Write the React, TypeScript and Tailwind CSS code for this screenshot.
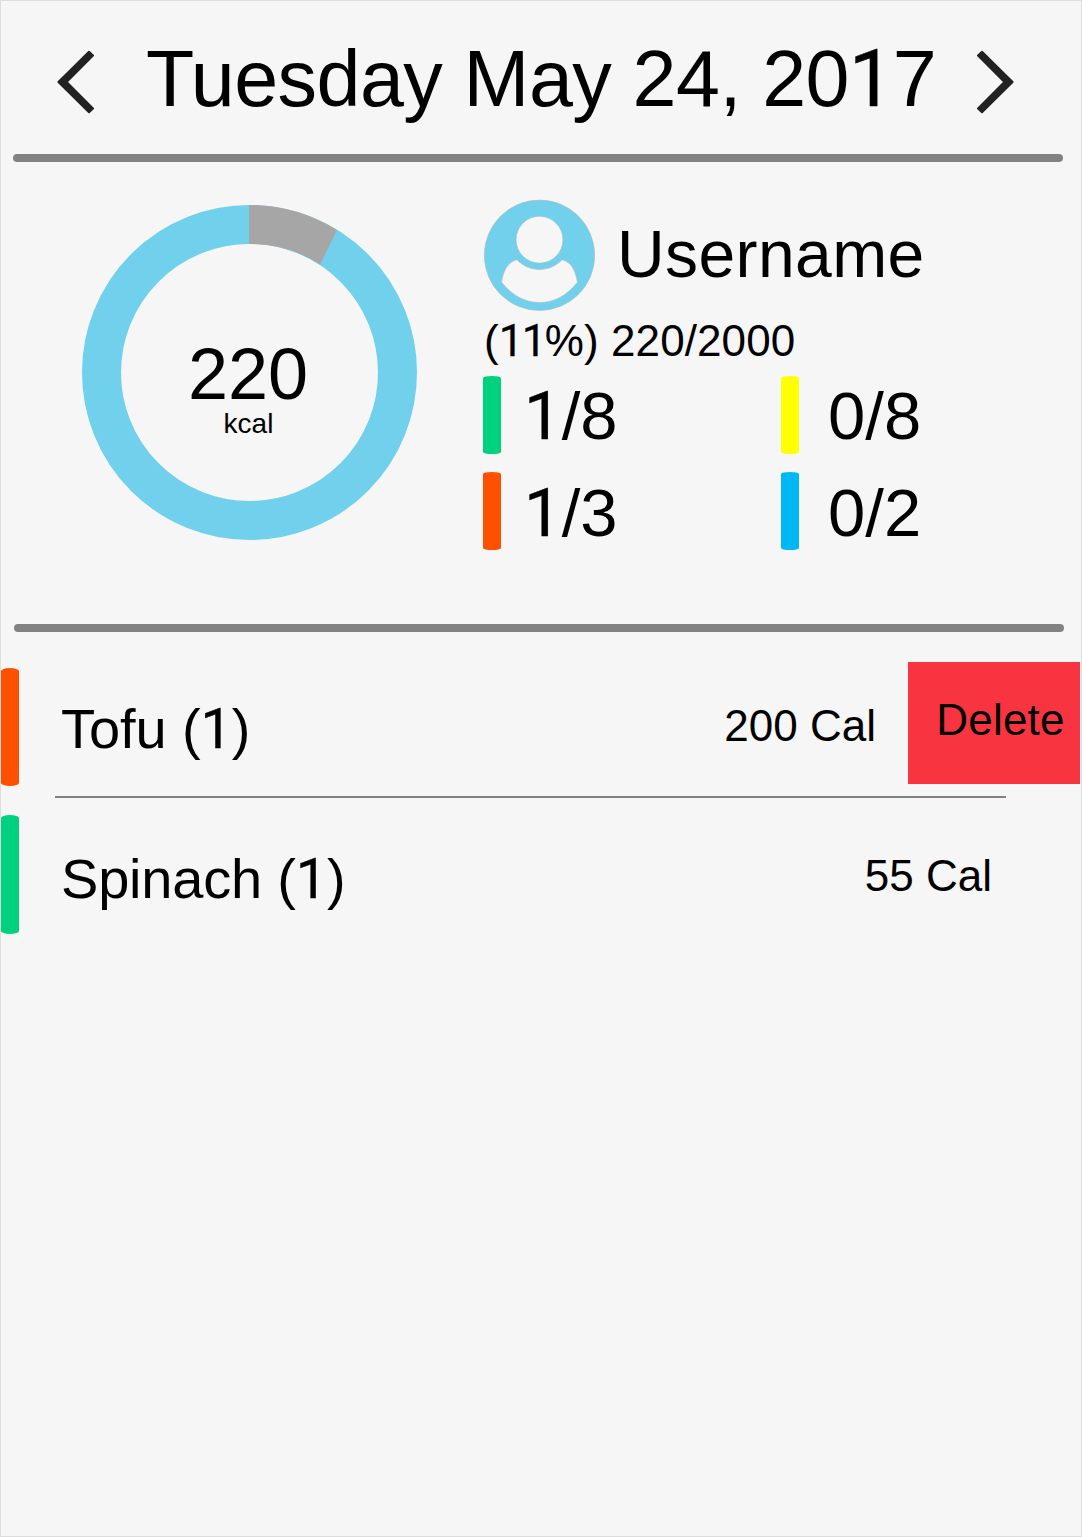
import React from "react";

/** Sets text in Liberation Sans, with plain-stemmed numeral ones, kerned when paired. */
function Label({ children }: { children: string }) {
  return (
    <>
      {children.split(/(1+)/).map((part, i) =>
        part.startsWith("1") ? (
          <span
            key={i}
            className={`font-['Roboto',sans-serif] leading-[0] [-webkit-text-stroke:0.006em_black] ${
              part.length > 1 ? "tracking-[-0.04em]" : ""
            }`}
          >
            {part}
          </span>
        ) : (
          part
        ),
      )}
    </>
  );
}

function Chevron({ flip = false }: { flip?: boolean }) {
  return (
    <svg
      width="38"
      height="66"
      viewBox="57 49 38 66"
      className={flip ? "block -scale-x-100" : "block"}
    >
      <path
        d="M58.4 82 89 51.7 93 55.5 66.6 82 93 108.5 89 112.3Z"
        fill="#222"
        stroke="#222"
        strokeWidth="2"
        strokeLinejoin="round"
      />
    </svg>
  );
}

function Donut() {
  return (
    <svg width="336" height="336" viewBox="82 204 336 336" className="col-start-1 row-start-1 block">
      <circle cx="249.5" cy="372.5" r="148" fill="none" stroke="#71d0eb" strokeWidth="39" />
      <path d="M249 205A167.5 167.5 0 0 1 337 230L320.2 264.5A128.5 128.5 0 0 0 249 244Z" fill="#a6a6a6" />
    </svg>
  );
}

function Avatar() {
  return (
    <svg width="112" height="112" viewBox="483 199 112 112" className="block shrink-0">
      <g stroke="#b5bcc0" strokeWidth="0.6">
        <circle cx="539.5" cy="255.3" r="55.2" fill="#71d0eb" />
        <circle cx="539.5" cy="239.7" r="23.4" fill="#f6f6f6" />
        <path
          d="M516.9 259.8C508 262 503.500 270 501.600 282.200C512 295.500 525 302.500 539.500 302.500S567 295.500 577.400 282.200C575.500 270 571 262 562.100 259.800C556 266 548.500 269.400 539.500 269.400S523 266 516.900 259.800Z"
          fill="#f6f6f6"
        />
      </g>
    </svg>
  );
}

function Portion({ color, value, text }: { color: string; value: string; text: string }) {
  return (
    <div className="flex h-[78px]">
      <div className={`h-[78px] w-[18px] rounded-[50%/2px] ${color}`} />
      <div className={`text-[67px] leading-none whitespace-nowrap ${text}`}>
        <Label>{value}</Label>
      </div>
    </div>
  );
}

export default function App() {
  return (
    <div className="flex h-[1537px] w-[1082px] flex-col overflow-hidden border border-[#dedede] bg-[#f6f6f6] font-['Liberation_Sans',Arial,sans-serif] text-black">
      <header className="flex h-[153px] shrink-0 items-start pl-[56px]">
        <button className="mt-[48px]" aria-label="Previous day">
          <Chevron />
        </button>
        <h1 className="mt-[38px] ml-[51px] w-[790px] text-[79px] leading-none tracking-[-0.55px] whitespace-nowrap">
          <Label>Tuesday May 24, 2017</Label>
        </h1>
        <button className="mt-[48px] ml-[40px]" aria-label="Next day">
          <Chevron flip />
        </button>
      </header>
      <div className="ml-[12px] h-[8px] w-[1050px] shrink-0 rounded-full bg-[#828282]" />

      <section className="flex h-[462px] shrink-0 pl-[81px]">
        <div className="mt-[42px] grid h-[336px] w-[336px]">
          <Donut />
          <div className="col-start-1 row-start-1 flex flex-col items-center pt-[134px] pr-[4px]">
            <div className="text-[72px] leading-none">220</div>
            <div className="pl-px text-[28px] leading-none">kcal</div>
          </div>
        </div>
        <div className="ml-[64px] pt-[37px]">
          <div className="flex pl-px">
            <Avatar />
            <div className="mt-[22px] ml-[22px] text-[66px] leading-none tracking-[0.4px]">Username</div>
          </div>
          <div className="mt-[8px] h-[44px] pl-[2px] text-[44px] leading-none tracking-[0.1px] whitespace-nowrap">
            <Label>(11%) 220/2000</Label>
          </div>
          <div className="mt-[13px] grid grid-cols-[298px_200px] gap-y-[18px] pl-px">
            <Portion color="bg-[#00d17e]" value="1/8" text="mt-[6px] pl-[23px]" />
            <Portion color="bg-[#ffff00]" value="0/8" text="mt-[6px] pl-[29px]" />
            <Portion color="bg-[#ff5000]" value="1/3" text="mt-[7px] pl-[23px]" />
            <Portion color="bg-[#00b9f2]" value="0/2" text="mt-[7px] pl-[29px]" />
          </div>
        </div>
      </section>
      <div className="ml-[13px] h-[8px] w-[1050px] shrink-0 rounded-full bg-[#828282]" />

      <ul>
        <li className="flex h-[164px] items-start pt-[30px]">
          <div className="mt-[6px] h-[118px] w-[18px] rounded-[50%/3px] bg-[#ff5000]" />
          <div className="mt-[39px] ml-[42px] w-[420px] text-[56px] leading-none tracking-[-0.1px]">
            <Label>Tofu (1)</Label>
          </div>
          <div className="mt-[42px] ml-auto text-[44px] leading-none">200 Cal</div>
          <button className="mr-px ml-[32px] h-[122px] w-[172px] bg-[#f83440] pb-[6px] pl-[13px] text-[44px] leading-none tracking-[0.2px]">
            Delete
          </button>
        </li>
        <li className="ml-[54px] h-[2px] w-[951px] bg-[#828282]" />
        <li className="flex h-[140px] items-start pt-[17px]">
          <div className="h-[119px] w-[18px] rounded-[50%/3px] bg-[#00d17e]" />
          <div className="mt-[36px] ml-[42px] w-[420px] text-[56px] leading-none tracking-[-0.2px]">
            <Label>Spinach (1)</Label>
          </div>
          <div className="mt-[39px] mr-[89px] ml-auto text-[44px] leading-none">55 Cal</div>
        </li>
      </ul>
    </div>
  );
}
